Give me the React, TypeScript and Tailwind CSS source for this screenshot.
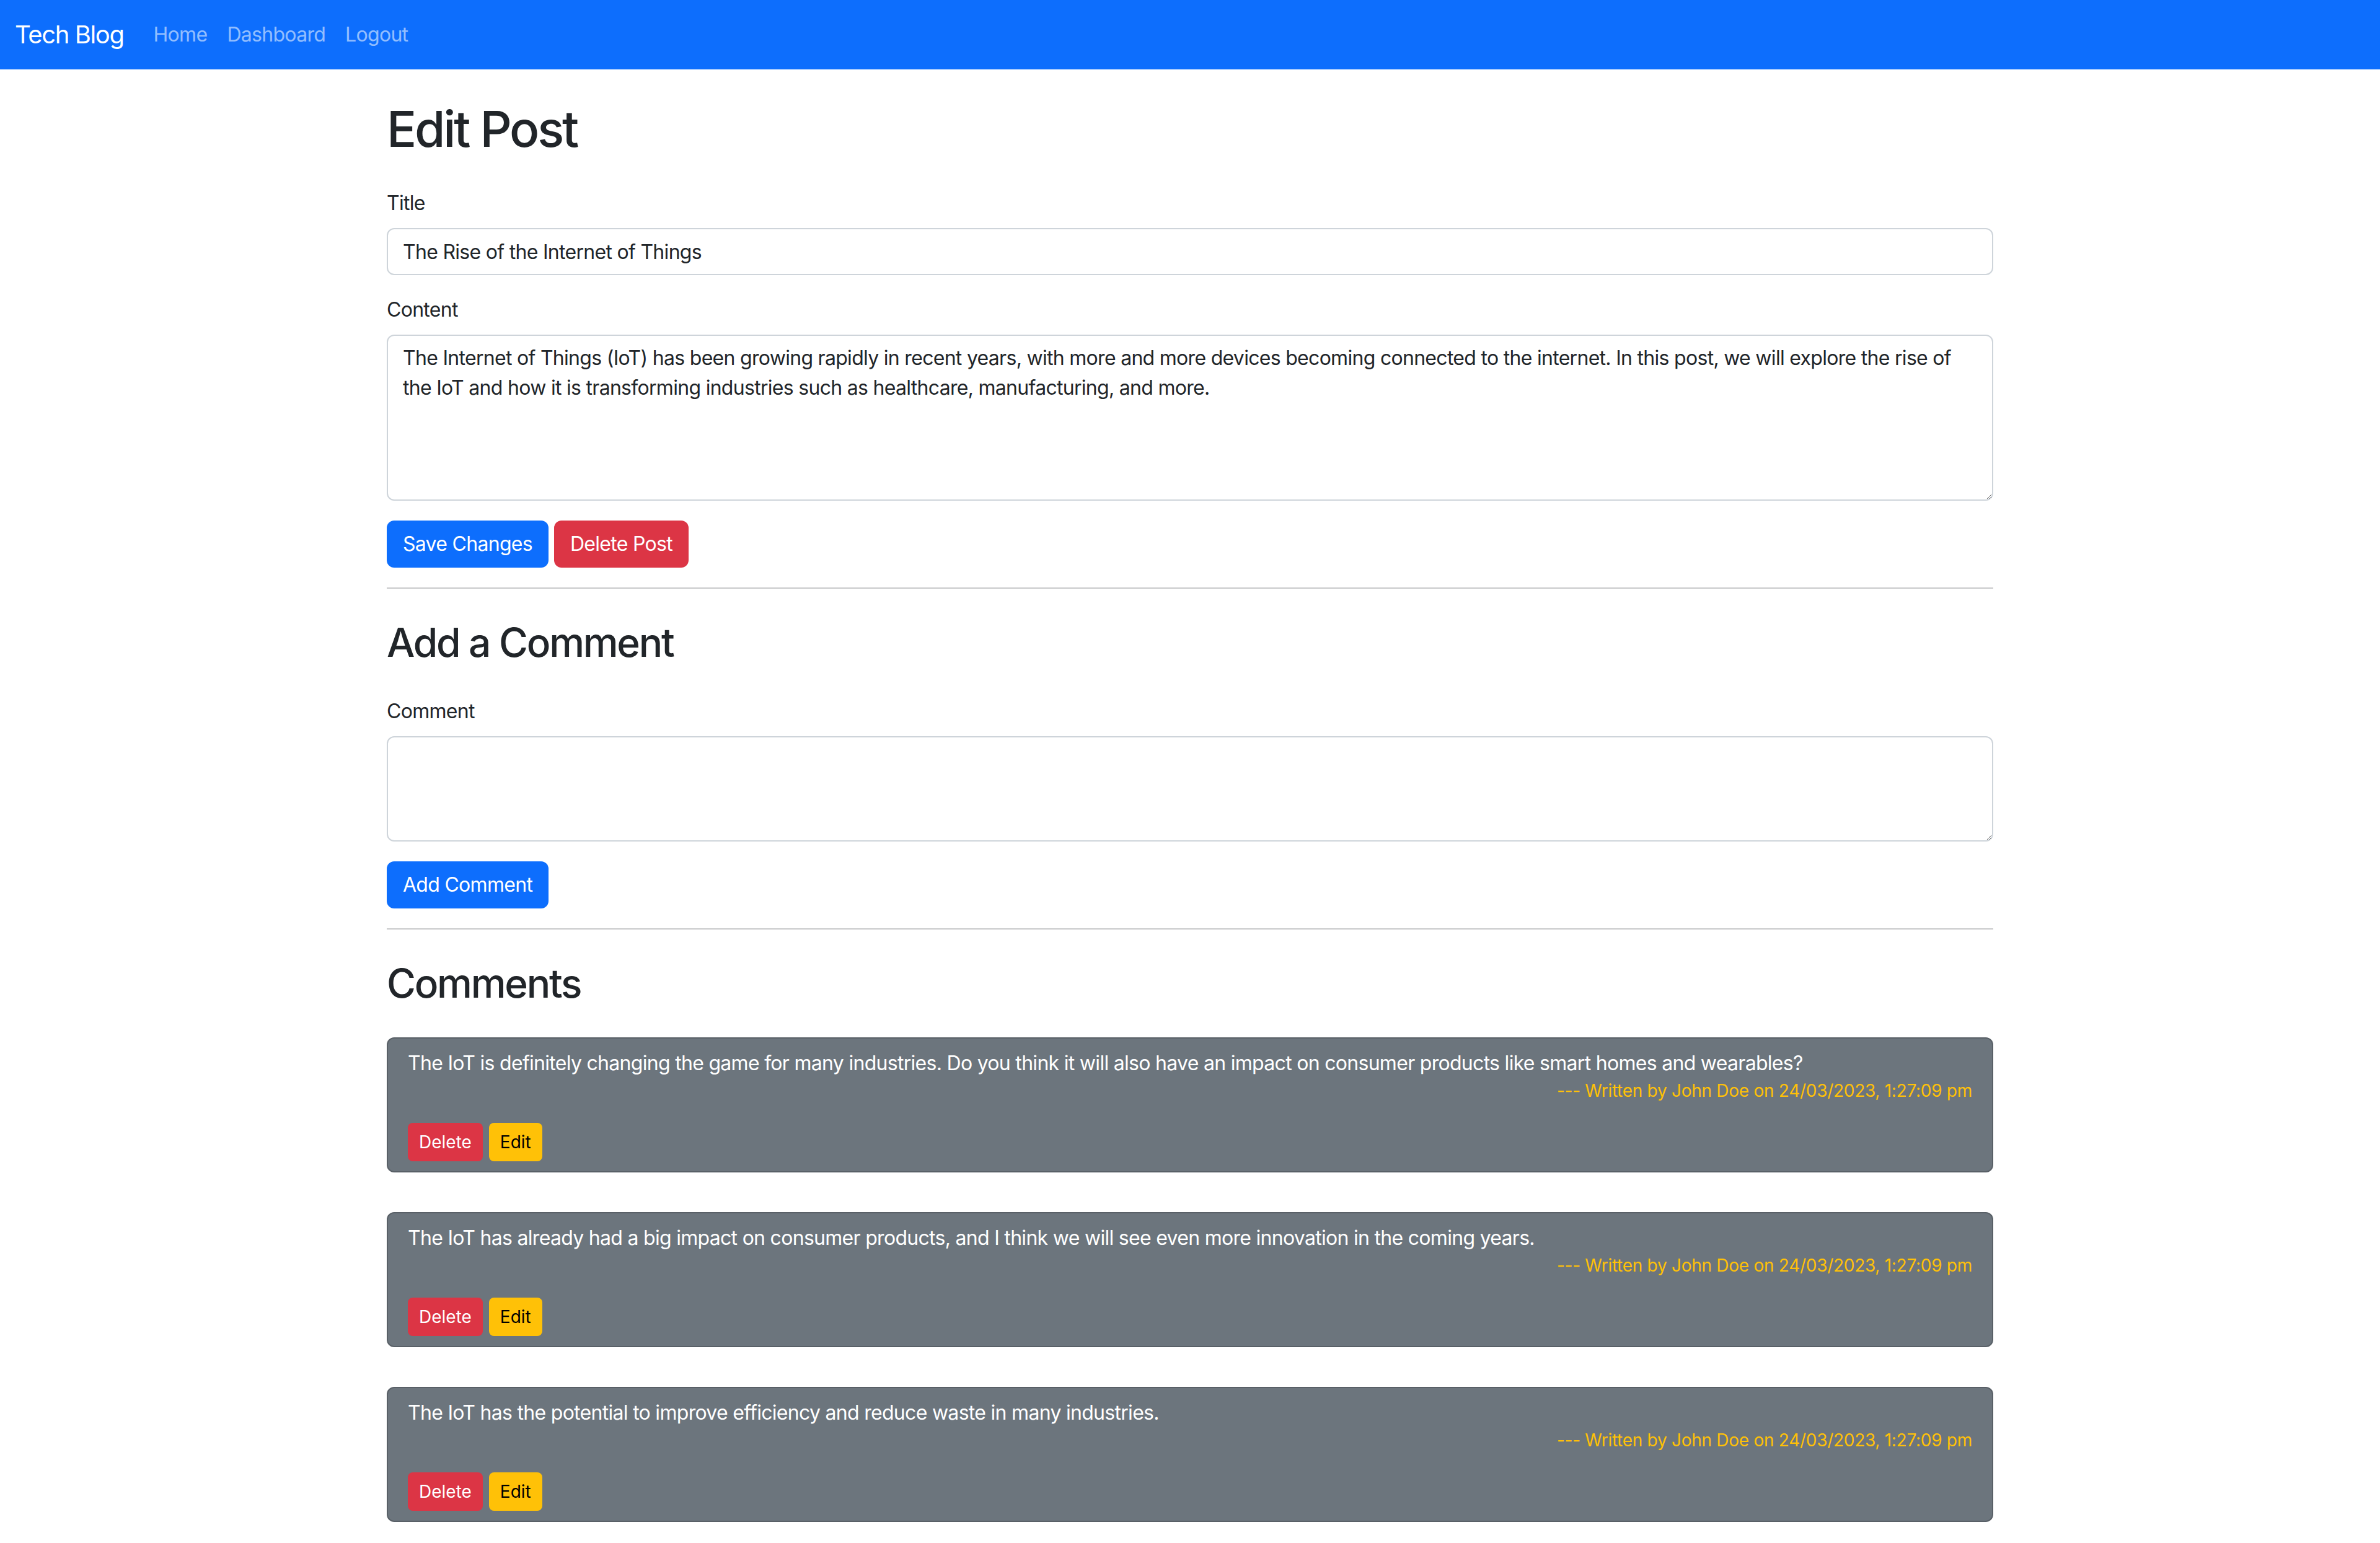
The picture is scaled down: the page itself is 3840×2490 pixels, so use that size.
import React from "react";

type CommentProps = {
  text: string;
  author: string;
  date: string;
};

const comments: CommentProps[] = [
  {
    text: "The IoT is definitely changing the game for many industries. Do you think it will also have an impact on consumer products like smart homes and wearables?",
    author: "John Doe",
    date: "24/03/2023, 1:27:09 pm",
  },
  {
    text: "The IoT has already had a big impact on consumer products, and I think we will see even more innovation in the coming years.",
    author: "John Doe",
    date: "24/03/2023, 1:27:09 pm",
  },
  {
    text: "The IoT has the potential to improve efficiency and reduce waste in many industries.",
    author: "John Doe",
    date: "24/03/2023, 1:27:09 pm",
  },
];

const postBody =
  "The Internet of Things (IoT) has been growing rapidly in recent years, with more and more devices becoming connected to the internet. In this post, we will explore the rise of the IoT and how it is transforming industries such as healthcare, manufacturing, and more.";

const Navbar = () => (
  <nav className="flex h-[112px] items-center bg-[#0d6efd] px-[24px]">
    <a href="#" className="mr-[32px] py-[10px] text-[40px] leading-[1.5] tracking-[-0.035em] text-white">
      Tech Blog
    </a>
    <ul className="flex list-none">
      {["Home", "Dashboard", "Logout"].map((link) => (
        <li key={link}>
          <a href="#" className="block px-[16px] py-[16px] text-[32px] leading-[1.5] text-white/55">
            {link}
          </a>
        </li>
      ))}
    </ul>
  </nav>
);

const Comment: React.FC<CommentProps> = ({ text, author, date }) => (
  <div className="rounded-[12px] border-2 border-black/[0.175] bg-[#6c757d] px-[32px] py-[16px] text-white">
    <p className="text-[32px] leading-[1.5]">{text}</p>
    <p className="mb-[32px] text-right text-[28px] leading-[40px] tracking-[-0.01em] text-[#ffc107]">
      --- Written by {author} on {date}
    </p>
    <div className="flex gap-[10px]">
      <button className="rounded-[8px] border-2 border-transparent bg-[#dc3545] px-[16px] py-[8px] text-[28px] leading-[1.5] tracking-normal text-white">
        Delete
      </button>
      <button className="rounded-[8px] border-2 border-transparent bg-[#ffc107] px-[16px] py-[8px] text-[28px] leading-[1.5] tracking-normal text-black">
        Edit
      </button>
    </div>
  </div>
);

export default function App() {
  return (
    <div className="min-h-screen bg-white font-['Inter','Liberation_Sans',sans-serif] text-[32px] leading-[1.5] tracking-[-0.022em] text-[#212529]">
      <Navbar />
      <main className="mx-auto flex w-[2640px] flex-col px-[24px] pt-[48px] pb-[32px]">
        <h1 className="mb-[16px] text-[80px] leading-[1.2] font-medium tracking-[-0.04em]">Edit Post</h1>
        <form className="mt-[32px]">
          <div className="mb-[32px]">
            <label className="mb-[16px] block">Title</label>
            <input
              type="text"
              defaultValue="The Rise of the Internet of Things"
              className="block h-[76px] w-full rounded-[12px] border-2 border-[#ced4da] px-[24px] py-[12px] text-[32px] leading-[1.5] text-[#212529]"
            />
          </div>
          <div className="mb-[32px]">
            <label className="mb-[16px] block">Content</label>
            <textarea
              rows={5}
              defaultValue={postBody}
              className="block h-[268px] w-full rounded-[12px] border-2 border-[#ced4da] px-[24px] py-[12px] text-[32px] leading-[1.5] text-[#212529]"
            />
          </div>
          <div className="flex gap-[9px]">
            <button type="button" className="rounded-[12px] border-2 border-transparent bg-[#0d6efd] px-[24px] py-[12px] leading-[1.5] text-white">
              Save Changes
            </button>
            <button type="button" className="rounded-[12px] border-2 border-transparent bg-[#dc3545] px-[24px] py-[12px] leading-[1.5] text-white">
              Delete Post
            </button>
          </div>
        </form>

        <hr className="my-[32px] border-t-2 border-[#c8c9ca]" />

        <h2 className="mt-[17px] mb-[16px] text-[64px] leading-[1.2] font-medium tracking-[-0.035em]">Add a Comment</h2>
        <form className="mt-[32px]">
          <div className="mb-[32px]">
            <label className="mb-[16px] block">Comment</label>
            <textarea
              rows={3}
              className="block h-[170px] w-full rounded-[12px] border-2 border-[#ced4da] px-[24px] py-[12px] text-[32px] leading-[1.5]"
            />
          </div>
          <button type="button" className="rounded-[12px] border-2 border-transparent bg-[#0d6efd] px-[24px] py-[12px] leading-[1.5] text-white">
            Add Comment
          </button>
        </form>

        <hr className="my-[32px] border-t-2 border-[#c8c9ca]" />

        <h2 className="mt-[17px] mb-[16px] text-[64px] leading-[1.2] font-medium tracking-[-0.035em]">Comments</h2>
        <div className="mt-[32px] flex flex-col gap-[64px]">
          {comments.map((c, i) => (
            <Comment key={i} {...c} />
          ))}
        </div>
      </main>
    </div>
  );
}
